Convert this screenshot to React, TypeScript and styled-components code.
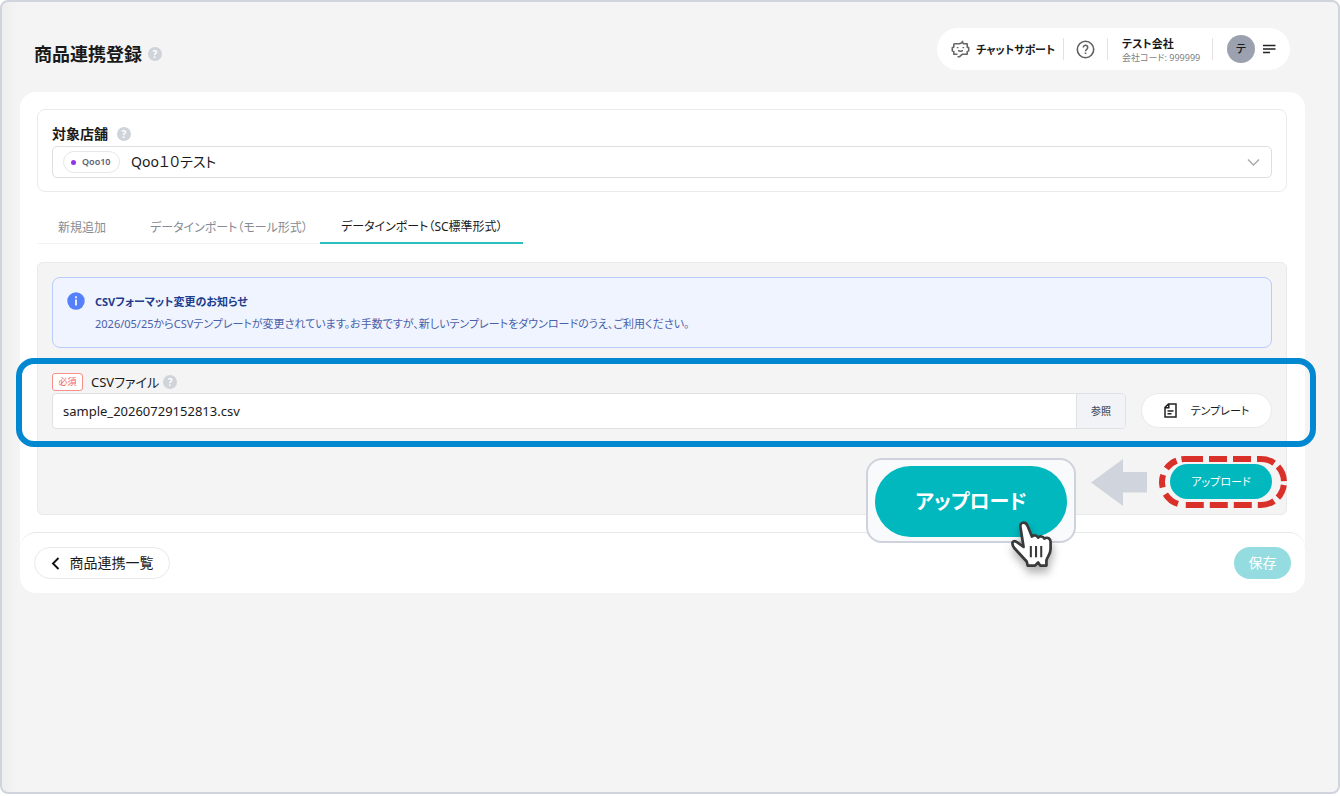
import React from "react";
import styled, { createGlobalStyle } from "styled-components";

const GlobalStyle = createGlobalStyle`
  * { box-sizing: border-box; }
  body {
    margin: 0;
    background: #fff;
    color: #1a1a1a;
    font-family: "Noto Sans", "Noto Sans CJK JP", sans-serif;
    font-feature-settings: "palt";
    font-size: 11px;
    line-height: 16px;
  }
  button, input, select {
    font: inherit;
    font-feature-settings: inherit;
    color: inherit;
    margin: 0;
  }
  button { cursor: pointer; }
`;

const Frame = styled.div`
  min-height: calc(100vh - 2px);
  padding: 26px 33px 32px 18px;
  border: 2px solid #d0d4dc;
  border-radius: 8px;
  background: linear-gradient(to right, #eeeeef, #f4f4f4 16px);
`;

const Header = styled.header`
  display: flex;
  align-items: center;
  justify-content: space-between;
  padding: 0 15px 0 14px;
  height: 42px;
  margin-bottom: 22px;
`;

const TitleGroup = styled.div`
  display: flex;
  align-items: center;
  gap: 6px;
  padding-top: 10px;
`;

const Title = styled.h1`
  margin: 0;
  font-size: 18px;
  line-height: 24px;
  font-weight: 700;
  font-feature-settings: normal;
`;

const HelpDot = styled.button`
  width: 14px;
  height: 14px;
  padding: 0;
  border: 0;
  border-radius: 50%;
  background: #cfd3da;
  color: #fff;
  font-size: 10px;
  line-height: 14px;
  font-weight: 700;
`;

const UserBar = styled.div`
  display: flex;
  align-items: center;
  height: 42px;
  padding: 0 14px;
  border-radius: 21px;
  background: #fff;
`;

const ChatButton = styled.button`
  display: flex;
  align-items: center;
  gap: 6px;
  padding: 0;
  border: 0;
  background: none;
  font-weight: 700;
  width: 112px;
  white-space: nowrap;
`;

const ChatLabel = styled.span`
  padding-top: 2px;
`;

const Separator = styled.span`
  width: 1px;
  height: 22px;
  background: #e2e2e4;
`;

const IconButton = styled.button`
  display: flex;
  padding: 0;
  border: 0;
  background: none;
  margin: 0 12px;
`;

const Company = styled.div`
  width: 90px;
  margin-left: 14px;
  padding-top: 3px;
`;

const CompanyName = styled.div`
  font-weight: 700;
  line-height: 14px;
`;

const CompanyCode = styled.div`
  font-size: 9px;
  line-height: 14px;
  color: #7d7f84;
`;

const Avatar = styled.span`
  display: grid;
  place-items: center;
  width: 28px;
  height: 28px;
  margin: 0 8px 0 14px;
  border-radius: 50%;
  background: #9ba1ae;
  font-weight: 500;
`;

const MenuButton = styled(IconButton)`
  margin: 0;
`;

const Card = styled.main`
  border-radius: 16px;
  background: #fff;
`;

const Content = styled.div`
  padding: 17px 18px 17px 17px;
`;

const StorePanel = styled.section`
  padding: 14px 14px 13px;
  border: 1px solid #e9eaec;
  border-radius: 8px;
`;

const LabelRow = styled.div`
  display: flex;
  align-items: center;
  gap: 9px;
  height: 20px;
`;

const StoreLabel = styled.label`
  font-size: 14px;
  font-weight: 700;
  font-feature-settings: normal;
`;

const SelectBox = styled.div`
  position: relative;
  display: flex;
  margin-top: 2px;
`;

const StoreSelect = styled.select`
  appearance: none;
  width: 100%;
  height: 32px;
  padding: 0 40px 0 78px;
  border: 1px solid #dcdee2;
  border-radius: 5px;
  background: #fff;
  font-size: 14px;
`;

const Chip = styled.span`
  position: absolute;
  top: 5px;
  left: 11px;
  display: flex;
  align-items: center;
  gap: 6px;
  height: 22px;
  padding: 0 8px 0 7px;
  border: 1px solid #e6e7e9;
  border-radius: 11px;
  font-size: 9px;
  font-weight: 600;
  color: #5c6270;
  pointer-events: none;
  &::before {
    content: "";
    width: 5px;
    height: 5px;
    border-radius: 50%;
    background: #9333ea;
  }
`;

const Chevron = styled.svg`
  position: absolute;
  top: 12px;
  right: 12px;
  pointer-events: none;
`;

const Tabs = styled.div`
  display: flex;
  margin: 20px 0 18px;
`;

const Tab = styled.button<{ $active?: boolean; $width: number }>`
  min-width: ${(p) => p.$width}px;
  height: 32px;
  padding: 0 12px 0 21px;
  border: 0;
  border-bottom: ${(p) => (p.$active ? "2px solid #2bbfc0" : "1px solid #f3f3f3")};
  background: none;
  color: ${(p) => (p.$active ? "#1a1a1a" : "#868b95")};
  font-size: 12px;
  text-align: left;
  white-space: nowrap;
`;

const ImportPanel = styled.section`
  padding: 14px 14px 15px;
  border: 1px solid #e8e9ea;
  border-radius: 6px;
  background: #f4f4f4;
`;

const Notice = styled.div`
  display: flex;
  gap: 10px;
  height: 71px;
  padding: 14px;
  border: 1px solid #b8cbfa;
  border-radius: 8px;
  background: #eff4ff;
`;

const NoticeTitle = styled.div`
  color: #1d3c8c;
  font-weight: 700;
  line-height: 20px;
`;

const NoticeText = styled.p`
  margin: 0;
  color: #4a60a8;
  line-height: 24px;
`;

const CsvGroup = styled.div`
  position: relative;
  margin-top: 25px;
`;

const CsvFocus = styled.span`
  position: absolute;
  inset: -15px -44px -18px -36px;
  border: 6px solid #0288d1;
  border-radius: 18px;
  pointer-events: none;
`;

const CsvLabelRow = styled.div`
  display: flex;
  align-items: center;
  height: 20px;
  padding-bottom: 2px;
`;

const Required = styled.span`
  width: 31px;
  height: 18px;
  margin-right: 8px;
  border: 1px solid #f98f8a;
  border-radius: 3px;
  background: #fff;
  color: #f0655e;
  font-size: 9px;
  line-height: 16px;
  text-align: center;
`;

const CsvLabel = styled.label`
  margin-right: 4px;
  font-size: 13px;
  line-height: 20px;
`;

const CsvRow = styled.div`
  display: flex;
  gap: 15px;
`;

const FileField = styled.div`
  display: flex;
  flex: 1;
  height: 36px;
  border: 1px solid #dfe1e5;
  border-radius: 4px;
  overflow: hidden;
  background: #fff;
`;

const FileName = styled.input`
  flex: 1;
  min-width: 0;
  padding: 0 10px;
  border: 0;
  background: none;
  font-size: 13px;
`;

const BrowseButton = styled.button`
  width: 49px;
  padding: 0;
  border: 0;
  border-left: 1px solid #dfe1e5;
  background: #f2f3f6;
  color: #4b5161;
  font-size: 10px;
  font-weight: 500;
`;

const PillButton = styled.button`
  display: flex;
  align-items: center;
  justify-content: center;
  border: 1px solid #e8e9ea;
  border-radius: 18px;
  background: #fff;
  white-space: nowrap;
`;

const TemplateButton = styled(PillButton)`
  gap: 14px;
  width: 131px;
  height: 35px;
`;

const UploadArea = styled.div`
  display: flex;
  justify-content: flex-end;
  padding-top: 35px;
`;

const UploadWrap = styled.div`
  position: relative;
`;

const UploadButton = styled.button`
  display: block;
  width: 102px;
  height: 35px;
  padding: 0;
  border: 0;
  border-radius: 18px;
  background: #00b8be;
  color: #fff;
`;

const DashRing = styled.svg`
  position: absolute;
  top: -8px;
  left: -11px;
  pointer-events: none;
`;

const Arrow = styled.svg`
  position: absolute;
  top: -5px;
  right: 125px;
`;

const Callout = styled.div`
  position: absolute;
  top: -6px;
  right: 196px;
  padding: 6px 7px 4px;
  border: 2px solid #cfd2dc;
  border-radius: 16px;
  background: #f9fafc;
`;

const CalloutButton = styled.button`
  display: block;
  width: 192px;
  height: 71px;
  padding: 0;
  border: 0;
  border-radius: 36px;
  background: #00b8be;
  color: #fff;
  font-size: 20px;
  font-weight: 600;
`;

const Pointer = styled.svg`
  position: absolute;
  top: 59px;
  left: 140px;
  filter: drop-shadow(1px 6px 4px rgba(0, 0, 0, 0.3));
`;

const Footer = styled.footer`
  display: flex;
  align-items: center;
  justify-content: space-between;
  height: 61px;
  padding: 0 14px;
  border-top: 1px solid #e6e7e9;
  border-radius: 16px;
`;

const BackButton = styled(PillButton)`
  gap: 10px;
  width: 136px;
  height: 32px;
  font-size: 14px;
  font-feature-settings: normal;
`;

const SaveButton = styled.button`
  width: 57px;
  height: 32px;
  padding: 0;
  border: 0;
  border-radius: 16px;
  background: #95dce0;
  color: #fff;
  font-size: 14px;
`;

const RobotIcon = () => (
  <svg width="19" height="18" viewBox="0 0 19 18" fill="none" stroke="#666" strokeWidth="1.600" strokeLinejoin="round" aria-hidden="true">
    <path d="M11.500.8V3.500M2.800 3.700h5.700l3-1.200 1 1.200h3.700V7l1.500.8v3l-1.500.8v2.700h-5L8.300 16.800H6.500M2.800 3.700V7l-1.500.8v3l1.500.8v2.700h3.700" />
    <path d="M5.800 7.600h1.700M11.500 7.600h1.700M7 10.700h1l.7.600h1.600l.7-.6h1" strokeWidth="1.400" />
  </svg>
);

const QuestionIcon = () => (
  <svg width="19" height="19" viewBox="0 0 19 19" fill="none" stroke="#606060" strokeWidth="1.600" aria-hidden="true">
    <circle cx="9.500" cy="9.500" r="8.200" />
    <path d="M7.300 7.500a2.200 2.200 0 1 1 3.400 1.800q-1.200.8-1.200 1.900M9.500 12.500v1.500" />
  </svg>
);

const MenuIcon = () => (
  <svg width="13" height="12" viewBox="0 0 13 12" stroke="#222" strokeWidth="1.600" aria-hidden="true">
    <path d="M0 2.500h12.500M0 6h12.500M0 9.500h7" />
  </svg>
);

const InfoIcon = () => (
  <svg width="18" height="18" viewBox="0 0 18 18" aria-hidden="true">
    <circle cx="9" cy="9" r="8.700" fill="#5580fb" />
    <path d="M9 4.200v2M9 7.500v6" stroke="#fff" strokeWidth="1.700" />
  </svg>
);

const TemplateIcon = () => (
  <svg width="13" height="15" viewBox="0 0 13 15" fill="none" stroke="#222" strokeWidth="1.500" aria-hidden="true">
    <path d="M4.500.9H12v13H1V4.400zM4.800 1v3.700H1M3.500 8h6M3.500 10.700h4" />
  </svg>
);

const BackIcon = () => (
  <svg width="9" height="13" viewBox="0 0 9 13" fill="none" stroke="#111" strokeWidth="1.900" aria-hidden="true">
    <path d="M7.500 1 2 6.500l5.500 5.500" />
  </svg>
);

export default function App() {
  return (
    <>
      <GlobalStyle />
      <Frame>
        <Header>
          <TitleGroup>
            <Title>商品連携登録</Title>
            <HelpDot type="button">?</HelpDot>
          </TitleGroup>
          <UserBar>
            <ChatButton type="button">
              <RobotIcon />
              <ChatLabel>チャットサポート</ChatLabel>
            </ChatButton>
            <Separator />
            <IconButton type="button" aria-label="ヘルプ">
              <QuestionIcon />
            </IconButton>
            <Separator />
            <Company>
              <CompanyName>テスト会社</CompanyName>
              <CompanyCode>会社コード: 999999</CompanyCode>
            </Company>
            <Separator />
            <Avatar>テ</Avatar>
            <MenuButton type="button" aria-label="メニュー">
              <MenuIcon />
            </MenuButton>
          </UserBar>
        </Header>

        <Card>
          <Content>
            <StorePanel>
              <LabelRow>
                <StoreLabel htmlFor="store">対象店舗</StoreLabel>
                <HelpDot type="button">?</HelpDot>
              </LabelRow>
              <SelectBox>
                <StoreSelect id="store">
                  <option>Qoo１０テスト</option>
                </StoreSelect>
                <Chip>Qoo10</Chip>
                <Chevron width="13" height="9" viewBox="0 0 13 9" fill="none" stroke="#aaa" strokeWidth="1.500" aria-hidden="true">
                  <path d="M1 1.500 6.500 7 12 1.500" />
                </Chevron>
              </SelectBox>
            </StorePanel>

            <Tabs role="tablist">
              <Tab type="button" role="tab" aria-selected={false} $width={92}>新規追加</Tab>
              <Tab type="button" role="tab" aria-selected={false} $width={191}>データインポート（モール形式）</Tab>
              <Tab type="button" role="tab" aria-selected $active $width={203}>データインポート（SC標準形式）</Tab>
            </Tabs>

            <ImportPanel>
              <Notice>
                <InfoIcon />
                <div>
                  <NoticeTitle>CSVフォーマット変更のお知らせ</NoticeTitle>
                  <NoticeText>
                    2026/05/25からCSVテンプレートが変更されています。お手数ですが、新しいテンプレートをダウンロードのうえ、ご利用ください。
                  </NoticeText>
                </div>
              </Notice>

              <CsvGroup>
                <CsvLabelRow>
                  <Required>必須</Required>
                  <CsvLabel htmlFor="csv">CSVファイル</CsvLabel>
                  <HelpDot type="button">?</HelpDot>
                </CsvLabelRow>
                <CsvRow>
                  <FileField>
                    <FileName id="csv" readOnly value="sample_20260729152813.csv" />
                    <BrowseButton type="button">参照</BrowseButton>
                  </FileField>
                  <TemplateButton type="button">
                    <TemplateIcon />
                    テンプレート
                  </TemplateButton>
                </CsvRow>
                <CsvFocus />
              </CsvGroup>

              <UploadArea>
                <UploadWrap>
                  <UploadButton type="button">アップロード</UploadButton>
                  <DashRing width="128" height="52" viewBox="0 0 128 52" fill="none" aria-hidden="true">
                    <path
                      d="M26 3h76a23 23 0 0 1 0 46H26a23 23 0 0 1 0-46z"
                      stroke="#d9302a"
                      strokeWidth="6"
                      strokeDasharray="23 6 18 6 18 6 18 5 16 4 14 5 17 6 18 6 18 6 18 8 16 7 13 7 13 5"
                      strokeDashoffset="5"
                    />
                  </DashRing>
                  <Arrow width="56" height="47" viewBox="0 0 56 47" aria-hidden="true">
                    <path d="M0 23.500 32 0v13h24v20.500H32V47z" fill="#d0d4dc" />
                  </Arrow>
                  <Callout>
                    <CalloutButton type="button">アップロード</CalloutButton>
                    <Pointer width="54" height="60" viewBox="0 0 52 56" aria-hidden="true">
                      <path
                        d="M12 7c-1-5 5-6 7-1l4 10c2-2 5-1 6 1 2-2 5-1 6 1 3-2 6 0 6 3v7c0 5-3 7-4 11v5h-6l-2-3-3 3h-7l-1-4-12-13c-3-4-2-8 2-6l7 5z"
                        fill="#fff"
                        stroke="#3a3a3a"
                        strokeWidth="2.600"
                        strokeLinejoin="round"
                      />
                      <path d="M22 25v11M27 25v11M32 25v11" stroke="#3a3a3a" strokeWidth="2" />
                    </Pointer>
                  </Callout>
                </UploadWrap>
              </UploadArea>
            </ImportPanel>
          </Content>

          <Footer>
            <BackButton type="button">
              <BackIcon />
              商品連携一覧
            </BackButton>
            <SaveButton type="button">保存</SaveButton>
          </Footer>
        </Card>
      </Frame>
    </>
  );
}
